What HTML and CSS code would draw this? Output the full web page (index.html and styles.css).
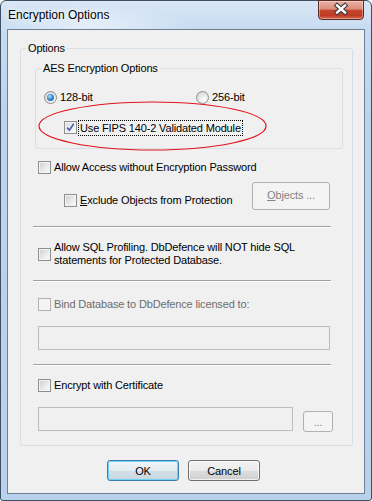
FILE: index.html
```html
<!DOCTYPE html>
<html lang="en">
<head>
    <meta charset="UTF-8">
    <title>Encryption Options</title>
    <link rel="stylesheet" href="styles.css">
</head>
<body>
    <div class="window">
        <div class="titlebar">
            <span class="title">Encryption Options</span>
            <span class="close">
                <svg width="44" height="17" viewBox="0 0 44 17">
                    <path d="M18 4.5 L26 11.5 M26 4.5 L18 11.5" stroke="#3a3a3a" stroke-width="4.6" stroke-linecap="square"/>
                    <path d="M18 4.5 L26 11.5 M26 4.5 L18 11.5" stroke="#fff" stroke-width="2.4" stroke-linecap="square"/>
                </svg>
            </span>
        </div>

        <div class="client">
            <div class="group options">
                <div class="group-title">Options</div>

                <div class="group aes">
                    <div class="group-title">AES Encryption Options</div>
                    <div class="radio-row">
                        <label class="opt first"><span class="radio on"></span>128-bit</label>
                        <label class="opt"><span class="radio"></span>256-bit</label>
                    </div>
                    <div class="row fips">
                        <span class="box checked">
                            <svg width="11" height="11" viewBox="0 0 11 11">
                                <path d="M2.2 5.6 L4.4 8.2 L8.8 1.8" fill="none" stroke="#4a5fa6" stroke-width="1.7"/>
                            </svg>
                        </span>
                        <span class="focus">Use FIPS 140-2 Validated Module</span>
                    </div>
                </div>

                <div class="row allow"><span class="box"></span>Allow Access without Encryption Password</div>

                <div class="exclude">
                    <label class="row sub"><span class="box"></span><span><u>E</u>xclude Objects from Protection</span></label>
                    <span class="btn disabled objects"><u>O</u>bjects ...</span>
                </div>

                <div class="sep sep1"></div>

                <div class="row sql">
                    <span class="box"></span>
                    <span>Allow SQL Profiling. DbDefence will NOT hide SQL<br>statements for Protected Database.</span>
                </div>

                <div class="sep sep2"></div>

                <div class="row bind off"><span class="box"></span>Bind Database to DbDefence licensed to:</div>
                <div class="field wide"></div>

                <div class="sep sep3"></div>

                <div class="row cert"><span class="box"></span>Encrypt with Certificate</div>
                <div class="field-row">
                    <div class="field"></div>
                    <span class="btn disabled dots">...</span>
                </div>
            </div>

            <div class="actions">
                <span class="btn default">OK</span>
                <span class="btn">Cancel</span>
            </div>
        </div>

        <!-- red annotation around the FIPS option -->
        <svg class="mark" width="230" height="51" viewBox="0 0 230 51">
            <ellipse cx="114.5" cy="25" rx="113.5" ry="24" fill="none" stroke="#e2141c" stroke-width="1.2"/>
        </svg>
    </div>
</body>
</html>
```

FILE: styles.css
```css
body {
    margin: 0;
    font-family: "Liberation Sans", Arial, sans-serif;
    font-size: 11px;
    letter-spacing: -0.15px;
    color: #000;
    background: #fff;
}
.window {
    position: relative;
    width: 372px;
    height: 501px;
    box-sizing: border-box;
    border: 1px solid #3e4f64;
    border-radius: 6px 6px 3px 3px;
    padding: 0 6px 6px;
    background:
        radial-gradient(ellipse 140px 30px at 90px 26px, rgba(255,255,255,0.55), rgba(255,255,255,0) 70%),
        linear-gradient(to bottom, #d9e7f6 0, #c6dbf1 30px, #bcd3ec 120px, #b9d1eb 100%);
}
.titlebar {
    height: 28px;
    display: flex;
    justify-content: space-between;
    align-items: flex-start;
}
.title {
    padding-left: 1px;
    line-height: 28px;
    font-size: 12px;
    letter-spacing: 0;
    text-shadow: 0 0 6px rgba(255,255,255,0.95), 0 0 2px rgba(255,255,255,0.9);
}
.close {
    width: 44px;
    height: 18px;
    margin-top: -1px;
    margin-right: 1px;
    border: 1px solid #5b2b26;
    border-radius: 0 0 4px 4px;
    background: linear-gradient(to bottom, #eab2a4 0%, #dc8c7b 45%, #c5452d 52%, #bf3a24 80%, #d9694e 100%);
    box-shadow: inset 0 0 0 1px rgba(255,255,255,0.35);
}
.close svg {
    display: block;
}
.client {
    height: 465px;
    box-sizing: border-box;
    border: 1px solid #6e8096;
    background: #f0f0f0;
}
.group {
    border: 1px solid #d5dfe5;
    border-radius: 3px;
}
.group-title {
    width: fit-content;
    background: #f0f0f0;
    padding: 0 2px;
    line-height: 14px;
    margin: -8px 0 -6px 5px;
}
.options {
    margin: 18px 11px 0 12px;
    padding-bottom: 13px;
}
.aes {
    margin: 19px 9px 0 14px;
    padding-bottom: 14px;
}
.radio-row {
    display: flex;
    height: 13px;
    margin-top: 22px;
    padding-left: 8px;
}
.opt {
    display: flex;
    align-items: center;
    gap: 3px;
    line-height: 13px;
}
.opt.first {
    width: 152px;
}
.radio {
    width: 13px;
    height: 13px;
    box-sizing: border-box;
    border: 1px solid #8e8f8f;
    border-radius: 50%;
    background: radial-gradient(circle at 65% 70%, #ffffff 0, #e9e9e9 45%, #c9cbce 100%);
    display: flex;
    align-items: center;
    justify-content: center;
}
.radio.on::after {
    content: "";
    width: 7px;
    height: 7px;
    border-radius: 50%;
    background: radial-gradient(circle at 40% 35%, #b6e6ff 0, #3b8fcf 45%, #15507f 100%);
}
.row {
    display: flex;
    align-items: center;
    gap: 3px;
    height: 13px;
    line-height: 13px;
}
.box {
    flex: none;
    width: 13px;
    height: 13px;
    box-sizing: border-box;
    border: 1px solid #8e8f8f;
    background: linear-gradient(135deg, #c8ccd2 0%, #e6e8ea 50%, #fbfbfb 100%);
    box-shadow: inset 0 0 0 1px #f3f3f3;
}
.box svg {
    display: block;
}
.box.checked {
    background: linear-gradient(135deg, #d4d8de 0%, #eceef0 50%, #fdfdfd 100%);
}
.fips {
    margin-top: 17px;
    padding-left: 28px;
    gap: 1px;
}
.focus {
    border: 1px dotted #000;
    padding: 0 1px;
    line-height: 14px;
}
.allow {
    margin-top: 12px;
    padding-left: 17px;
}
.exclude {
    display: flex;
    align-items: flex-start;
    height: 28px;
    margin-top: 8px;
}
.sub {
    margin: 12px 0 0 43px;
}
.btn {
    display: flex;
    align-items: center;
    justify-content: center;
    box-sizing: border-box;
    border: 1px solid #707070;
    border-radius: 3px;
    background: linear-gradient(to bottom, #f2f2f2 0%, #ebebeb 50%, #dddddd 51%, #cfcfcf 100%);
    box-shadow: inset 0 0 0 1px rgba(255,255,255,0.7);
}
.btn.disabled {
    border-color: #adb2b5;
    background: #f4f4f4;
    box-shadow: none;
    color: #838383;
}
.objects {
    width: 78px;
    height: 28px;
    margin-left: auto;
    margin-right: 22px;
    padding-bottom: 3px;
}
.sep {
    margin: 0 21px 0 12px;
    border-top: 1px solid #a0a0a0;
    border-bottom: 1px solid #fff;
}
.sep1 {
    margin-top: 16px;
}
.sep2 {
    margin-top: 13px;
}
.sep3 {
    margin-top: 14px;
}
.sql {
    height: 26px;
    margin-top: 13px;
    padding-left: 17px;
}
.bind {
    margin-top: 16px;
    padding-left: 17px;
}
.off {
    color: #6d6d6d;
}
.off .box {
    border-color: #b1b1b1;
    background: #f4f4f4;
    box-shadow: none;
}
.field {
    box-sizing: border-box;
    height: 24px;
    border: 1px solid #bdbdbd;
    background: #f0f0f0;
}
.field.wide {
    width: 292px;
    margin: 15px 0 0 17px;
}
.cert {
    margin-top: 13px;
    padding-left: 17px;
}
.field-row {
    display: flex;
    align-items: flex-start;
    margin: 15px 0 0 17px;
}
.field-row .field {
    width: 255px;
}
.dots {
    width: 30px;
    height: 21px;
    margin: 4px 0 0 10px;
}
.actions {
    display: flex;
    gap: 9px;
    margin: 14px 0 0 99px;
}
.actions .btn {
    width: 72px;
    height: 21px;
}
.btn.default {
    border-color: #3c7fb1;
    background: linear-gradient(to bottom, #f0f5f8 0%, #e4ecf1 50%, #d4e0e8 51%, #c9d7e1 100%);
    box-shadow: inset 0 0 0 1px #6fd2f7;
}
.mark {
    position: absolute;
    left: 37px;
    top: 100px;
}
```
